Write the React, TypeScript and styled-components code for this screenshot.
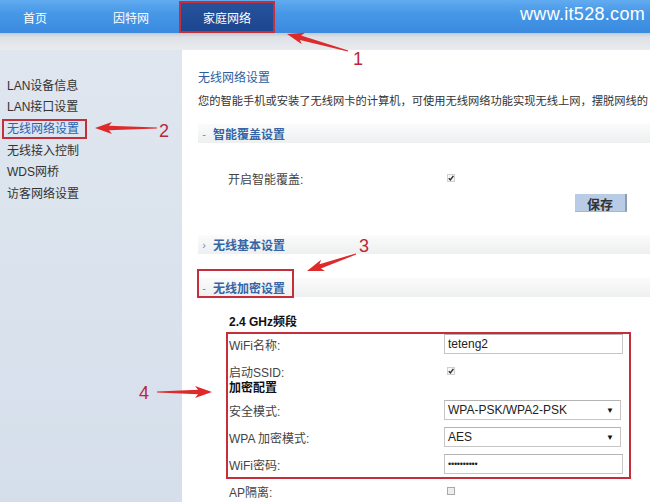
import React from "react";
import styled, { createGlobalStyle, css } from "styled-components";

const MARK = "#c52f3b";
const ARROW = "#de2a2a";

const GlobalStyle = createGlobalStyle`
  html, body { margin: 0; padding: 0; }
  body {
    width: 650px;
    height: 502px;
    overflow: hidden;
    background: #fff;
    font-family: "Liberation Sans", "Noto Sans CJK SC", sans-serif;
  }
`;

const Stage = styled.div`
  position: relative;
  width: 650px;
  height: 502px;
  overflow: hidden;
  background: #eceef1;
`;

/* ---------- top navigation ---------- */
const Header = styled.header`
  height: 33px;
  display: flex;
  justify-content: space-between;
  background: linear-gradient(#62abf0 0%, #4698e7 40%, #3a8ae0 100%);
`;

const NavList = styled.nav`
  display: flex;
  margin-left: -13px;
  padding-top: 1px;
`;

const NavItem = styled.a<{ $active?: boolean; $marked?: boolean }>`
  width: 96px;
  box-sizing: border-box;
  display: flex;
  align-items: center;
  justify-content: center;
  color: #fff;
  font-size: 12px;
  text-decoration: none;
  ${(p) =>
    p.$active &&
    css`
      background: linear-gradient(#26529c, #1d4690);
    `}
  ${(p) =>
    p.$marked &&
    css`
      border: 2px solid ${MARK};
    `}
`;

const Logo = styled.div`
  align-self: center;
  margin-top: -4px;
  padding-right: 5px;
  color: #fff;
  font-size: 18px;
  letter-spacing: 0.3px;
`;

const SubBar = styled.div`
  height: 17px;
  background: linear-gradient(#c4c9d1 0px, #dde1e6 4px, #e9ecef 100%);
`;

/* ---------- body ---------- */
const Body = styled.div`
  display: flex;
  height: 452px;
`;

const Sidebar = styled.aside`
  width: 182px;
  flex: none;
  padding-top: 25px;
  background: linear-gradient(#dfe6ef, #d5dfeb);
`;

const SideRow = styled.div`
  height: 21.6px;
  display: flex;
  align-items: center;
`;

const SideLink = styled.a<{ $active?: boolean; $marked?: boolean }>`
  font-size: 12px;
  line-height: 16px;
  color: ${(p) => (p.$active ? "#2b62b1" : "#333")};
  text-decoration: none;
  padding-left: 7px;
  ${(p) =>
    p.$marked &&
    css`
      margin-left: 2px;
      padding: 0 6px 0 3px;
      border: 2px solid ${MARK};
    `}
`;

const Main = styled.main`
  flex: 1;
  min-width: 0;
  background: #fff;
  padding: 20px 0 0 16px;
  overflow: hidden;
`;

const Title = styled.div`
  font-size: 12px;
  line-height: 16px;
  color: #2d5f9e;
  margin-bottom: 7px;
`;

const Desc = styled.div`
  font-size: 11.25px;
  line-height: 16px;
  color: #333;
  white-space: nowrap;
`;

const SectionBar = styled.div<{ $top: number }>`
  margin-top: ${(p) => p.$top}px;
  height: 19px;
  width: 460px;
  display: flex;
  align-items: center;
  padding-left: 3px;
  box-sizing: border-box;
  background: linear-gradient(#fbfbfb, #eeeff0);
`;

const SectionTitle = styled.span<{ $marked?: boolean }>`
  position: relative;
  display: flex;
  align-items: center;
  gap: 6px;
  font-size: 12px;
  font-weight: bold;
  color: #3565a5;
  ${(p) =>
    p.$marked &&
    css`
      &::after {
        content: "";
        position: absolute;
        left: -4px;
        right: -9px;
        top: -10px;
        bottom: -2px;
        border: 2px solid ${MARK};
      }
    `}
`;

const Toggle = styled.span`
  width: 6px;
  font-size: 11px;
  font-weight: normal;
  color: #7a8aa0;
  text-align: center;
`;

const FormRow = styled.div<{ $top?: number; $h?: number }>`
  display: flex;
  align-items: center;
  margin-top: ${(p) => p.$top ?? 0}px;
  height: ${(p) => p.$h ?? 20}px;
`;

const Label = styled.span`
  width: 215px;
  flex: none;
  font-size: 12px;
  color: #444;
`;

const Inset = styled.div<{ $left: number; $top?: number }>`
  margin-left: ${(p) => p.$left}px;
  margin-top: ${(p) => p.$top ?? 0}px;
`;

const SubHeading = styled.div<{ $top?: number }>`
  margin-top: ${(p) => p.$top ?? 0}px;
  font-size: 12px;
  line-height: 16px;
  font-weight: bold;
  color: #111;
`;

const MarkedGroup = styled.div`
  width: 405px;
  box-sizing: border-box;
  border: 2px solid ${MARK};
  padding: 0 0 3px 1px;
`;

const Field = styled.div<{ $w: number }>`
  width: ${(p) => p.$w}px;
  height: 20px;
  box-sizing: border-box;
  display: flex;
  align-items: center;
  justify-content: space-between;
  padding: 0 6px 0 3px;
  border: 1px solid #c6c6c6;
  border-top-color: #b4b4b4;
  background: #fff;
  font-size: 12px;
  color: #222;
`;

const Dots = styled.span`
  font-size: 9px;
  letter-spacing: -0.2px;
  color: #222;
`;

const Caret = styled.span`
  font-size: 8px;
  color: #111;
`;

const ButtonRow = styled.div`
  width: 429px;
  margin-top: 6px;
  display: flex;
  justify-content: flex-end;
`;

const SaveButton = styled.button`
  width: 52px;
  height: 18px;
  padding: 0;
  border: none;
  border-right: 2px solid #8e9cae;
  border-bottom: 1px solid #a8b6c8;
  background: #b8cce5;
  font-family: inherit;
  font-size: 13px;
  font-weight: bold;
  color: #333;
`;

const Overlay = styled.svg`
  position: absolute;
  left: 0;
  top: 0;
  pointer-events: none;
`;

/* small native-looking check box */
function Check({ on, offset = 3 }: { on: boolean; offset?: number }) {
  return (
    <svg width="9" height="9" viewBox="0 0 9 9" style={{ marginLeft: offset }}>
      <rect x="0.5" y="0.5" width="7" height="7" fill={on ? "#f6f6f6" : "#eeeeee"} stroke={on ? "#d0d0d0" : "#a9a9a9"} />
      {on && <path d="M1.8 4.2 L3.4 5.9 L6.4 1.9" fill="none" stroke="#333" strokeWidth="1.5" />}
    </svg>
  );
}

/* tapered annotation arrow from tail to head */
function arrowPoints(tx: number, ty: number, hx: number, hy: number) {
  const dx = hx - tx;
  const dy = hy - ty;
  const len = Math.hypot(dx, dy);
  const ux = dx / len;
  const uy = dy / len;
  const nx = -uy;
  const ny = ux;
  const headLen = 14;
  const neckX = hx - ux * headLen;
  const neckY = hy - uy * headLen;
  const barbX = hx - ux * (headLen + 3);
  const barbY = hy - uy * (headLen + 3);
  const pts: [number, number][] = [
    [tx + nx * 0.6, ty + ny * 0.6],
    [neckX + nx * 2.2, neckY + ny * 2.2],
    [barbX + nx * 6, barbY + ny * 6],
    [hx, hy],
    [barbX - nx * 6, barbY - ny * 6],
    [neckX - nx * 2.2, neckY - ny * 2.2],
    [tx - nx * 0.6, ty - ny * 0.6],
  ];
  return pts.map(([x, y]) => `${x.toFixed(1)},${y.toFixed(1)}`).join(" ");
}

const arrows = [
  { tail: [348, 51], head: [287, 34] },
  { tail: [157, 128], head: [95, 128] },
  { tail: [356, 254], head: [307, 271] },
  { tail: [157, 392], head: [212, 392] },
];

const labels = [
  { n: "1", x: 358, y: 65 },
  { n: "2", x: 164, y: 137 },
  { n: "3", x: 364, y: 252 },
  { n: "4", x: 144, y: 399 },
];

const sideItems = ["LAN设备信息", "LAN接口设置", "无线网络设置", "无线接入控制", "WDS网桥", "访客网络设置"];

export default function App() {
  return (
    <>
      <GlobalStyle />
      <Stage>
        <Header>
          <NavList>
            <NavItem>首页</NavItem>
            <NavItem>因特网</NavItem>
            <NavItem $active $marked>
              家庭网络
            </NavItem>
          </NavList>
          <Logo>www.it528.com</Logo>
        </Header>
        <SubBar />
        <Body>
          <Sidebar>
            {sideItems.map((t) => {
              const current = t === "无线网络设置";
              return (
                <SideRow key={t}>
                  <SideLink $active={current} $marked={current}>
                    {t}
                  </SideLink>
                </SideRow>
              );
            })}
          </Sidebar>
          <Main>
            <Title>无线网络设置</Title>
            <Desc>您的智能手机或安装了无线网卡的计算机，可使用无线网络功能实现无线上网，摆脱网线的</Desc>

            <SectionBar $top={15}>
              <SectionTitle>
                <Toggle>-</Toggle>智能覆盖设置
              </SectionTitle>
            </SectionBar>
            <Inset $left={30}>
              <FormRow $top={25}>
                <Label>开启智能覆盖:</Label>
                <Check on offset={4} />
              </FormRow>
            </Inset>
            <ButtonRow>
              <SaveButton>保存</SaveButton>
            </ButtonRow>

            <SectionBar $top={23}>
              <SectionTitle>
                <Toggle>›</Toggle>无线基本设置
              </SectionTitle>
            </SectionBar>

            <SectionBar $top={24}>
              <SectionTitle $marked>
                <Toggle>-</Toggle>无线加密设置
              </SectionTitle>
            </SectionBar>

            <Inset $left={31} $top={17}>
              <SubHeading>2.4 GHz频段</SubHeading>
            </Inset>
            <Inset $left={28} $top={2}>
              <MarkedGroup>
                <FormRow>
                  <Label>WiFi名称:</Label>
                  <Field $w={179}>teteng2</Field>
                </FormRow>
                <FormRow $top={9} $h={16}>
                  <Label>启动SSID:</Label>
                  <Check on />
                </FormRow>
                <FormRow $top={1} $h={16}>
                  <SubHeading>加密配置</SubHeading>
                </FormRow>
                <FormRow $top={4}>
                  <Label>安全模式:</Label>
                  <Field $w={177}>
                    WPA-PSK/WPA2-PSK<Caret>▼</Caret>
                  </Field>
                </FormRow>
                <FormRow $top={7}>
                  <Label>WPA 加密模式:</Label>
                  <Field $w={177}>
                    AES<Caret>▼</Caret>
                  </Field>
                </FormRow>
                <FormRow $top={7}>
                  <Label>WiFi密码:</Label>
                  <Field $w={179}>
                    <Dots>••••••••••</Dots>
                  </Field>
                </FormRow>
              </MarkedGroup>
            </Inset>
            <Inset $left={31} $top={4}>
              <FormRow $h={16}>
                <Label>AP隔离:</Label>
                <Check on={false} />
              </FormRow>
            </Inset>
          </Main>
        </Body>

        <Overlay width="650" height="502" viewBox="0 0 650 502">
          {arrows.map((a, i) => (
            <polygon key={i} points={arrowPoints(a.tail[0], a.tail[1], a.head[0], a.head[1])} fill={ARROW} />
          ))}
          {labels.map((l) => (
            <text
              key={l.n}
              x={l.x}
              y={l.y}
              textAnchor="middle"
              fontSize="18"
              fontFamily="Liberation Sans, sans-serif"
              fill="#b8283a"
            >
              {l.n}
            </text>
          ))}
        </Overlay>
      </Stage>
    </>
  );
}
